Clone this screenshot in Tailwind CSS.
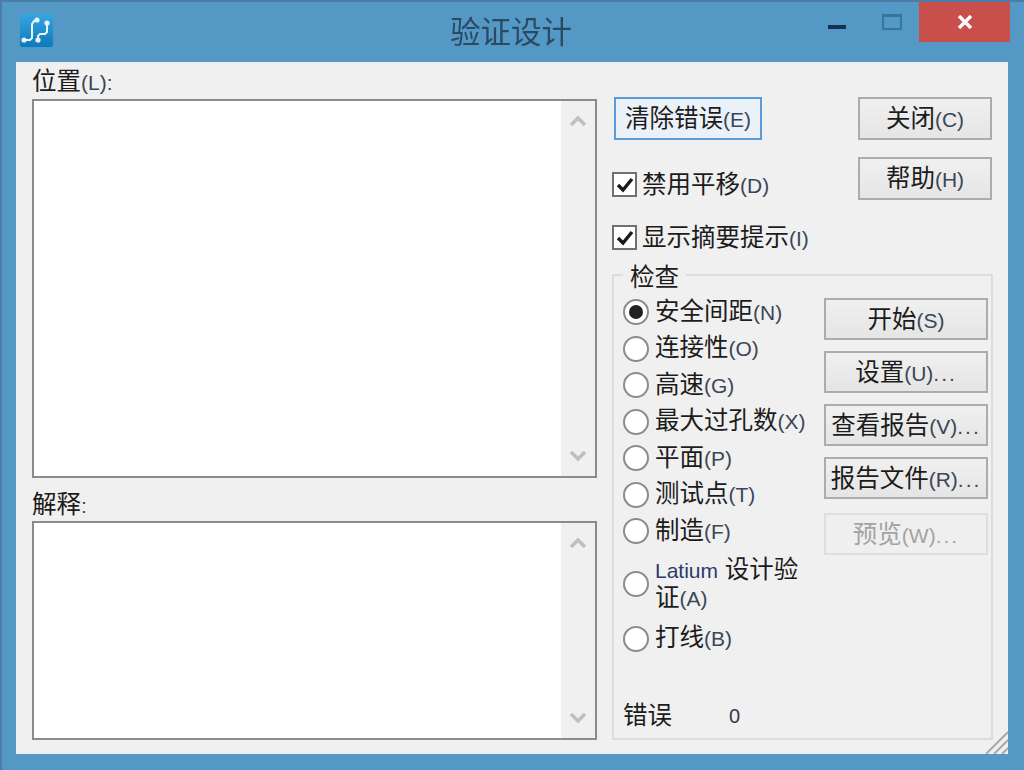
<!DOCTYPE html>
<html lang="zh-CN">
<head>
  <meta charset="UTF-8" />
  <title>验证设计</title>
  <script src="https://cdn.jsdelivr.net/npm/@tailwindcss/browser@4"></script>
</head>
<body class="w-[1024px] h-[770px] overflow-hidden bg-[#5499c6] [font-family:'Liberation_Sans','Noto_Sans_CJK_SC',sans-serif] text-[24.5px] leading-[30px] text-[#1c1c1c]">
<div class="relative w-[1024px] h-[770px] border-t-2 border-l-2 border-[#4a7ea6] flex flex-col blur-[0.4px]">

  <!-- Title bar -->
  <header class="h-[60px] shrink-0 relative flex items-start">
    <svg class="ml-[18px] mt-[12px]" width="33" height="33" viewBox="0 0 33 33">
      <defs>
        <linearGradient id="logo" x1="0" y1="0" x2="0" y2="1">
          <stop offset="0" stop-color="#35a6e4" />
          <stop offset="1" stop-color="#0f78b8" />
        </linearGradient>
      </defs>
      <rect width="33" height="33" rx="2" fill="url(#logo)" />
      <path d="M4 26h6l2-2V10l2-3h3M18 26v-4l2-2h5l2-2V9" fill="none" stroke="#e6f4fc" stroke-width="2" />
      <circle cx="4" cy="26" r="2.6" fill="#e6f4fc" />
      <circle cx="18" cy="26" r="2.6" fill="#e6f4fc" />
      <circle cx="17" cy="6" r="2.6" fill="#e6f4fc" />
      <circle cx="27" cy="9" r="2.6" fill="#e6f4fc" />
    </svg>
    <div class="absolute left-[448px] top-[12px] text-[30.5px] leading-[36px] text-[#2b4a62]">验证设计</div>
    <div class="absolute left-[826px] top-[23px] w-[18px] h-[4px] bg-[#17324f]"></div>
    <div class="absolute left-[880px] top-[12px] w-[20px] h-[16px] border-2 border-t-[3px] border-[#35769f]"></div>
    <div class="absolute left-[917px] top-0 w-[91px] h-[40px] bg-[#c94f4d] flex items-center justify-center">
      <svg width="16" height="14" viewBox="0 0 16 14"><path d="M2 1l12 12M14 1L2 13" stroke="#fff" stroke-width="3.4" fill="none" /></svg>
    </div>
  </header>

  <!-- Client area -->
  <main class="relative ml-[14px] w-[992px] h-[692px] bg-[#f0f0f0] flex pl-[16px] pt-[3px]">
    <!-- Lists -->
    <div class="w-[565px] flex flex-col">
      <div class="h-[34px] pt-[2px]">位置<span class="text-[21px] text-[#3b4657]">(L):</span></div>
      <div class="h-[379px] border-2 border-[#8b8b8b] bg-white flex justify-end">
        <div class="w-[34px] bg-[#f0f0f0] flex flex-col items-center justify-between py-[14px] text-[#bfbfbf]">
          <svg width="18" height="12" viewBox="0 0 18 12"><path d="M2 10l7-7 7 7" fill="none" stroke="currentColor" stroke-width="3.5" /></svg>
          <svg width="18" height="12" viewBox="0 0 18 12"><path d="M2 2l7 7 7-7" fill="none" stroke="currentColor" stroke-width="3.5" /></svg>
        </div>
      </div>
      <div class="h-[43px] pt-[12px]">解释<span class="text-[21px] text-[#3b4657]">:</span></div>
      <div class="h-[219px] border-2 border-[#8b8b8b] bg-white flex justify-end">
        <div class="w-[34px] bg-[#f0f0f0] flex flex-col items-center justify-between py-[14px] text-[#bfbfbf]">
          <svg width="18" height="12" viewBox="0 0 18 12"><path d="M2 10l7-7 7 7" fill="none" stroke="currentColor" stroke-width="3.5" /></svg>
          <svg width="18" height="12" viewBox="0 0 18 12"><path d="M2 2l7 7 7-7" fill="none" stroke="currentColor" stroke-width="3.5" /></svg>
        </div>
      </div>
    </div>

    <!-- Right side -->
    <div class="ml-[15px] w-[381px] flex flex-col">
      <div class="h-[209px] flex justify-between">
        <div class="flex flex-col">
          <button class="ml-[2px] mt-[32px] w-[148px] h-[43px] pt-[2px] border-2 border-[#5a9bd8] bg-[#eaf1f8] leading-none whitespace-nowrap">清除错误<span class="text-[21px] text-[#3b4657]">(E)</span></button>
          <label class="mt-[32px] h-[25px] flex items-center gap-[5px] whitespace-nowrap">
            <span class="w-[25px] h-[25px] border-2 border-[#707070] bg-white flex items-center justify-center">
              <svg width="18" height="16" viewBox="0 0 18 16"><path d="M2 8l5 5 9-11" fill="none" stroke="#1a1a1a" stroke-width="3.4" /></svg>
            </span>
            <span class="pt-[2px]">禁用平移<span class="text-[21px] text-[#3b4657]">(D)</span></span>
          </label>
          <label class="mt-[28px] h-[25px] flex items-center gap-[5px] whitespace-nowrap">
            <span class="w-[25px] h-[25px] border-2 border-[#707070] bg-white flex items-center justify-center">
              <svg width="18" height="16" viewBox="0 0 18 16"><path d="M2 8l5 5 9-11" fill="none" stroke="#1a1a1a" stroke-width="3.4" /></svg>
            </span>
            <span class="pt-[2px]">显示摘要提示<span class="text-[21px] text-[#3b4657]">(I)</span></span>
          </label>
        </div>
        <div class="flex flex-col gap-[17px] pt-[32px] mr-px">
          <button class="w-[134px] h-[43px] pt-[2px] border-2 border-[#acacac] bg-gradient-to-b from-[#f0f0f0] to-[#e5e5e5] leading-none">关闭<span class="text-[21px] text-[#3b4657]">(C)</span></button>
          <button class="w-[134px] h-[43px] pt-[2px] border-2 border-[#acacac] bg-gradient-to-b from-[#f0f0f0] to-[#e5e5e5] leading-none">帮助<span class="text-[21px] text-[#3b4657]">(H)</span></button>
        </div>
      </div>

      <!-- Group box -->
      <section class="relative h-[466px] border-2 border-[#dcdcdc] flex">
        <div class="absolute left-[9px] -top-[11px] bg-[#f0f0f0] px-[7px] h-[26px] leading-[26px]">检查</div>
        <div class="w-[210px] pl-[9px] pt-[18px] flex flex-col whitespace-nowrap">
          <div class="h-[36.5px] flex items-center gap-[6px]">
            <span class="w-[26px] h-[26px] rounded-full border-2 border-[#8c8c8c] bg-white flex items-center justify-center"><span class="w-[14px] h-[14px] rounded-full bg-[#222]"></span></span>
            <span>安全间距<span class="text-[21px] text-[#3b4657]">(N)</span></span>
          </div>
          <div class="h-[36.5px] flex items-center gap-[6px]">
            <span class="w-[26px] h-[26px] rounded-full border-2 border-[#8c8c8c] bg-white"></span>
            <span>连接性<span class="text-[21px] text-[#3b4657]">(O)</span></span>
          </div>
          <div class="h-[36.5px] flex items-center gap-[6px]">
            <span class="w-[26px] h-[26px] rounded-full border-2 border-[#8c8c8c] bg-white"></span>
            <span>高速<span class="text-[21px] text-[#3b4657]">(G)</span></span>
          </div>
          <div class="h-[36.5px] flex items-center gap-[6px]">
            <span class="w-[26px] h-[26px] rounded-full border-2 border-[#8c8c8c] bg-white"></span>
            <span>最大过孔数<span class="text-[21px] text-[#3b4657]">(X)</span></span>
          </div>
          <div class="h-[36.5px] flex items-center gap-[6px]">
            <span class="w-[26px] h-[26px] rounded-full border-2 border-[#8c8c8c] bg-white"></span>
            <span>平面<span class="text-[21px] text-[#3b4657]">(P)</span></span>
          </div>
          <div class="h-[36.5px] flex items-center gap-[6px]">
            <span class="w-[26px] h-[26px] rounded-full border-2 border-[#8c8c8c] bg-white"></span>
            <span>测试点<span class="text-[21px] text-[#3b4657]">(T)</span></span>
          </div>
          <div class="h-[36.5px] flex items-center gap-[6px]">
            <span class="w-[26px] h-[26px] rounded-full border-2 border-[#8c8c8c] bg-white"></span>
            <span>制造<span class="text-[21px] text-[#3b4657]">(F)</span></span>
          </div>
          <div class="h-[68px] flex items-center gap-[6px]">
            <span class="w-[26px] h-[26px] rounded-full border-2 border-[#8c8c8c] bg-white"></span>
            <span class="leading-[27px]"><span class="text-[21px] text-[#2e3a6a]">Latium</span> 设计验<br />证<span class="text-[21px] text-[#3b4657]">(A)</span></span>
          </div>
          <div class="mt-[3px] h-[36.5px] flex items-center gap-[6px]">
            <span class="w-[26px] h-[26px] rounded-full border-2 border-[#8c8c8c] bg-white"></span>
            <span>打线<span class="text-[21px] text-[#3b4657]">(B)</span></span>
          </div>
          <div class="mt-auto h-[44px] flex items-center">
            <span class="w-[106px]">错误</span>
            <span class="text-[20px] text-[#2f3a4a]">0</span>
          </div>
        </div>
        <div class="pt-[22px] flex flex-col gap-[11px]">
          <button class="w-[164px] h-[42px] pt-[3px] border-2 border-[#acacac] bg-gradient-to-b from-[#f0f0f0] to-[#e5e5e5] leading-none">开始<span class="text-[21px] text-[#3b4657]">(S)</span></button>
          <button class="w-[164px] h-[42px] pt-[3px] border-2 border-[#acacac] bg-gradient-to-b from-[#f0f0f0] to-[#e5e5e5] leading-none">设置<span class="text-[21px] text-[#3b4657]">(U)<span class="tracking-[2px]">...</span></span></button>
          <button class="w-[164px] h-[42px] pt-[3px] border-2 border-[#acacac] bg-gradient-to-b from-[#f0f0f0] to-[#e5e5e5] leading-none whitespace-nowrap">查看报告<span class="text-[21px] text-[#3b4657]">(V)<span class="tracking-[2px]">...</span></span></button>
          <button class="w-[164px] h-[42px] pt-[3px] border-2 border-[#acacac] bg-gradient-to-b from-[#f0f0f0] to-[#e5e5e5] leading-none whitespace-nowrap">报告文件<span class="text-[21px] text-[#3b4657]">(R)<span class="tracking-[2px]">...</span></span></button>
          <button class="mt-[3px] w-[164px] h-[42px] pt-[3px] border-2 border-[#dedede] bg-[#efefef] text-[#a3a3a3] leading-none">预览<span class="text-[21px]">(W)<span class="tracking-[2px]">...</span></span></button>
        </div>
      </section>
    </div>

    <!-- Resize grip -->
    <svg class="absolute right-0 bottom-0" width="24" height="24" viewBox="0 0 24 24">
      <path d="M2 24L24 2M10 24L24 10M18 24l6-6" stroke="#a9a9a9" stroke-width="2" fill="none" />
    </svg>
  </main>
</div>
</body>
</html>
